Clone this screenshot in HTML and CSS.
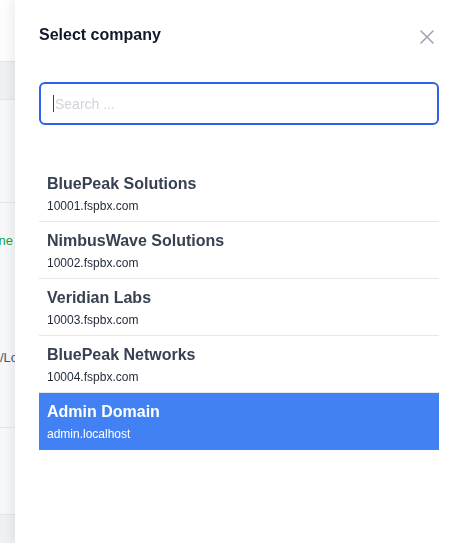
FILE: index.html
```html
<!DOCTYPE html>
<html lang="en">
<head>
<meta charset="utf-8">
<title>Select company</title>
<link rel="stylesheet" href="styles.css">
</head>
<body>
<div class="page">
  <div class="page-top"></div>
  <div class="table-head"></div>
  <div class="table-row row-a"></div>
  <div class="table-row row-b">
    <div class="cell-end"><span class="status">Online</span></div>
    <div class="cell-start"><span class="muted">SIP/Local</span></div>
  </div>
  <div class="table-row row-c"></div>
  <div class="table-foot"></div>
</div>

<aside class="drawer">
  <div class="drawer-head">
    <h2 class="drawer-title">Select company</h2>
    <button class="close-btn" aria-label="Close">
      <svg width="14" height="14" viewBox="0 0 14 14" fill="none" stroke="currentColor" stroke-width="1.5" stroke-linecap="round">
        <path d="M1 1L13 13M13 1L1 13"/>
      </svg>
    </button>
  </div>
  <div class="search-box">
    <span class="caret"></span>
    <input class="search-input" type="text" placeholder="Search ...">
  </div>
  <ul class="company-list">
    <li class="company">
      <div class="company-name">BluePeak Solutions</div>
      <div class="company-domain">10001.fspbx.com</div>
    </li>
    <li class="company">
      <div class="company-name">NimbusWave Solutions</div>
      <div class="company-domain">10002.fspbx.com</div>
    </li>
    <li class="company">
      <div class="company-name">Veridian Labs</div>
      <div class="company-domain">10003.fspbx.com</div>
    </li>
    <li class="company">
      <div class="company-name">BluePeak Networks</div>
      <div class="company-domain">10004.fspbx.com</div>
    </li>
    <li class="company is-active">
      <div class="company-name">Admin Domain</div>
      <div class="company-domain">admin.localhost</div>
    </li>
  </ul>
</aside>
</body>
</html>
```

FILE: styles.css
```css
* { box-sizing: border-box; }

html, body {
  margin: 0;
  padding: 0;
  height: 100%;
  overflow: hidden;
  font-family: "Liberation Sans", Arial, Helvetica, sans-serif;
}

.page {
  display: flex;
  flex-direction: column;
  height: 543px;
  background: #f6f7f9;
}

.page-top {
  height: 62px;
  background: #fdfdfd;
  border-bottom: 1px solid #e3e5e8;
}

.table-head {
  height: 38px;
  background: #eff0f2;
  border-bottom: 1px solid #e3e5e8;
}

.table-row {
  background: #f6f7f9;
  border-bottom: 1px solid #e3e5e8;
}

.row-a { height: 103px; }

.row-b {
  height: 225px;
  display: flex;
  flex-direction: column;
  padding-top: 30px;
  font-size: 13px;
}

.cell-end {
  width: 13px;
  display: flex;
  justify-content: flex-end;
  white-space: nowrap;
  height: 16px;
}

.status { color: #16a34a; }

.cell-start {
  margin-top: 101px;
  white-space: nowrap;
  margin-left: -21px;
}

.muted { color: #4b5563; }

.row-c { height: 87px; }

.table-foot {
  flex: 1;
  background: #eff0f2;
}

/* Drawer */
.drawer {
  position: fixed;
  top: 0;
  right: 0;
  bottom: 0;
  width: 448px;
  background: #ffffff;
  box-shadow: -3px 0 10px rgba(0, 0, 0, 0.07);
  padding: 24px 24px 0 24px;
}

.drawer-head {
  display: flex;
  justify-content: space-between;
  align-items: center;
  height: 22px;
}

.drawer-title {
  margin: 0;
  font-size: 16px;
  line-height: 22px;
  font-weight: 700;
  color: #111827;
}

.close-btn {
  border: 0;
  background: none;
  padding: 0;
  width: 14px;
  height: 14px;
  margin-right: 5px;
  margin-top: 3px;
  color: #9ca3af;
  display: flex;
}

.search-box {
  margin-top: 36px;
  height: 43px;
  border: 2px solid #2f62e6;
  border-radius: 6px;
  display: flex;
  align-items: center;
  padding-left: 12px;
}

.caret {
  width: 1px;
  height: 17px;
  background: #374151;
}

.search-input {
  flex: 1;
  border: 0;
  outline: none;
  font-family: inherit;
  font-size: 14px;
  color: #111827;
  padding: 0 0 0 1px;
  background: transparent;
}

.search-input::placeholder { color: #cfd3da; }

.company-list {
  list-style: none;
  margin: 40px 0 0 0;
  padding: 0;
}

.company {
  padding: 9px 8px 5px 8px;
  border-bottom: 1px solid #e5e7eb;
}

.company-name {
  font-size: 16px;
  line-height: 20px;
  font-weight: 700;
  color: #374151;
}

.company-domain {
  margin-top: 2px;
  font-size: 12px;
  line-height: 20px;
  color: #1f2937;
}

.company.is-active {
  background: #4281f3;
  border-bottom-color: #4281f3;
}

.company.is-active .company-name,
.company.is-active .company-domain {
  color: #ffffff;
}
```
